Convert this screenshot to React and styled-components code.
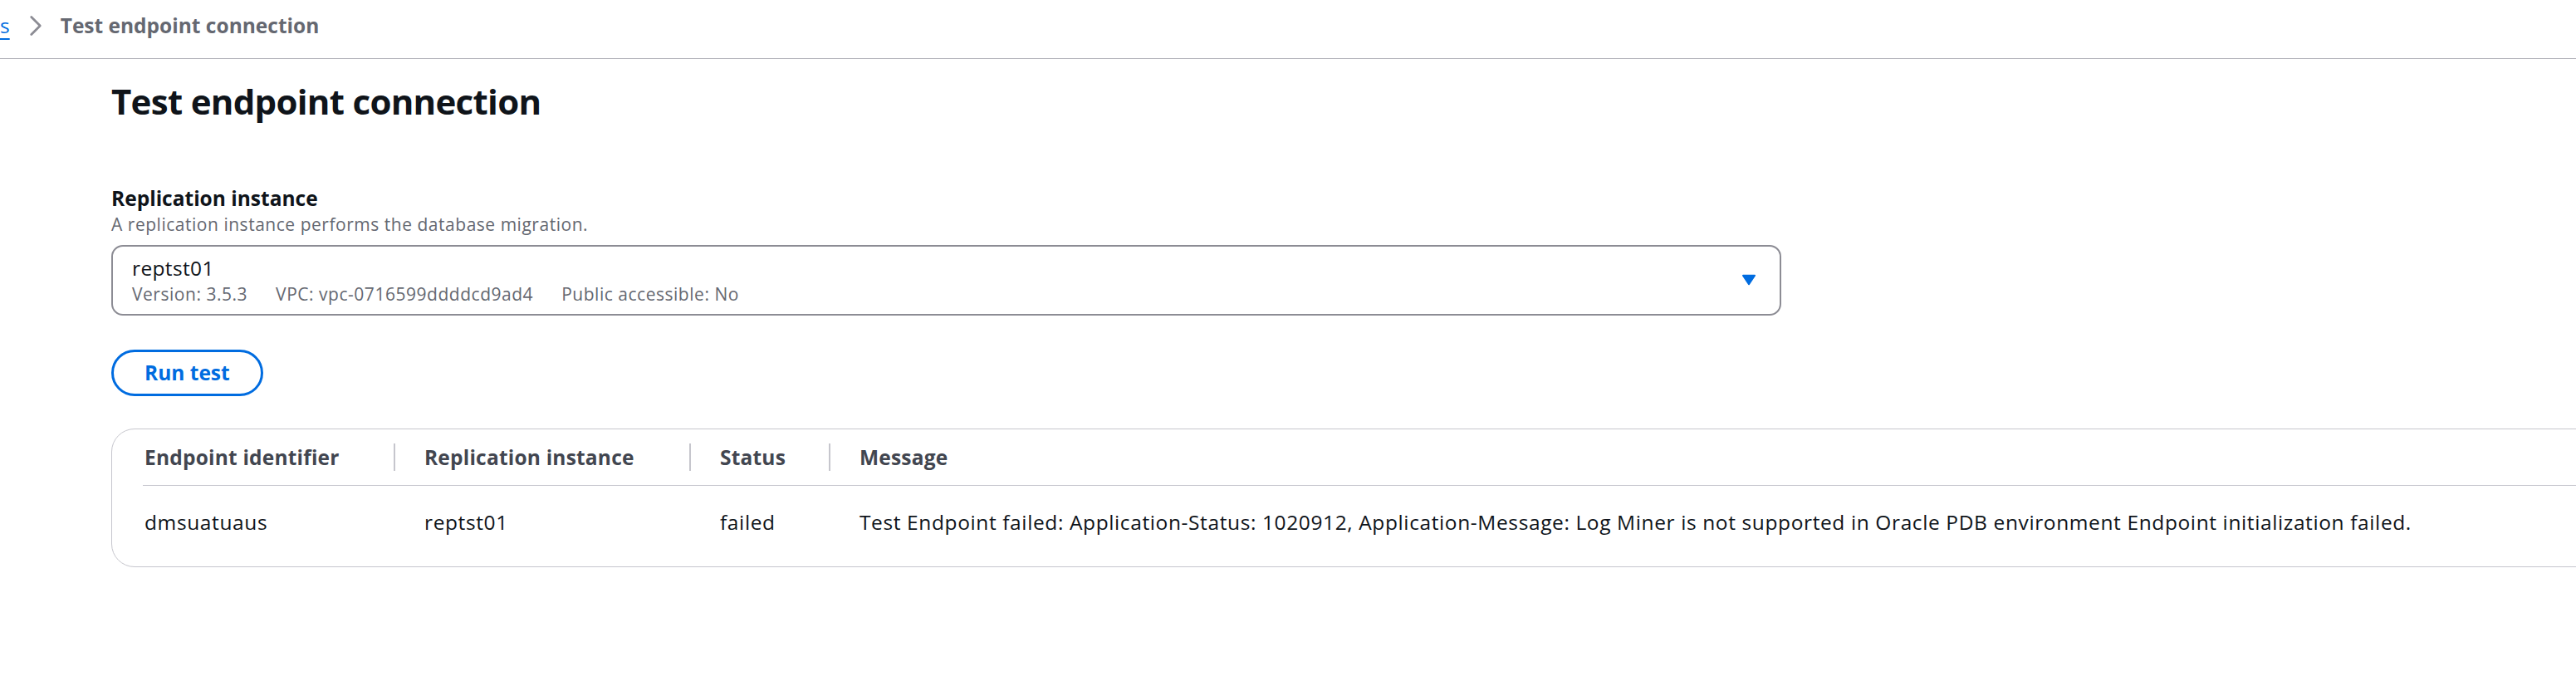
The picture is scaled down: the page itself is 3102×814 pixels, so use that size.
import React from "react";
import styled, { createGlobalStyle } from "styled-components";

const GlobalStyle = createGlobalStyle`
  html, body {
    margin: 0;
    padding: 0;
    background: #ffffff;
  }
  body {
    font-family: "Open Sans", "Noto Sans", sans-serif;
    color: #0f141a;
    overflow: hidden;
  }
  * { box-sizing: border-box; }
`;

const Page = styled.div`
  width: 100%;
  min-height: 814px;
  overflow: hidden;
`;

const BreadcrumbBar = styled.nav`
  display: flex;
  align-items: center;
  padding: 13px 0 22px;
  border-bottom: 1px solid #b4b4bb;
`;

const CrumbLink = styled.a`
  font-size: 24.5px;
  line-height: 35px;
  color: #006ce0;
  text-decoration: underline;
  text-decoration-thickness: 2px;
  text-underline-offset: 6px;
  cursor: pointer;
`;

const CrumbSep = styled.span`
  display: inline-flex;
  width: 28px;
  height: 28px;
  margin: 0 16px 0 17px;
  color: #8c8c94;
`;

const CrumbCurrent = styled.span`
  font-size: 24.5px;
  line-height: 35px;
  font-weight: 700;
  color: #656871;
`;

const Main = styled.main`
  display: flex;
  flex-direction: column;
  align-items: flex-start;
  padding: 25px 0 0 134px;
`;

const Title = styled.h1`
  margin: 0;
  font-size: 42px;
  line-height: 52px;
  font-weight: 700;
  letter-spacing: -0.7px;
  color: #0f141a;
`;

const Field = styled.div`
  display: flex;
  flex-direction: column;
  margin-top: 73px;
`;

const Label = styled.label`
  font-size: 24.5px;
  line-height: 35px;
  font-weight: 700;
  color: #0f141a;
`;

const Description = styled.div`
  font-size: 21px;
  line-height: 28px;
  letter-spacing: 0.025em;
  color: #656871;
`;

const SelectTrigger = styled.button`
  margin-top: 11px;
  width: 2011px;
  height: 85px;
  display: flex;
  align-items: center;
  justify-content: space-between;
  padding: 8px 23px 10px 23px;
  border: 2px solid #8c8c94;
  border-radius: 14px;
  background: #ffffff;
  font-family: inherit;
  text-align: left;
  cursor: pointer;
`;

const OptionText = styled.div`
  display: flex;
  flex-direction: column;
`;

const OptionLabel = styled.span`
  font-size: 24.5px;
  line-height: 35px;
  letter-spacing: 0.015em;
  color: #0f141a;
`;

const OptionTags = styled.div`
  display: flex;
  gap: 34px;
  font-size: 21px;
  line-height: 28px;
  letter-spacing: 0.025em;
  color: #656871;
`;

const Caret = styled.span`
  display: inline-flex;
  width: 28px;
  height: 28px;
  color: #006ce0;
`;

const RunButton = styled.button`
  margin-top: 41px;
  padding: 6px 37px;
  border: 3px solid #006ce0;
  border-radius: 35px;
  background: #ffffff;
  color: #006ce0;
  font-family: inherit;
  font-size: 24.5px;
  line-height: 38px;
  font-weight: 700;
  cursor: pointer;
`;

const Card = styled.section`
  margin-top: 39px;
  width: 3000px;
  border: 1px solid #c6c6cd;
  border-radius: 28px;
  padding-left: 37px;
  background: #ffffff;
`;

const Grid = styled.div`
  display: grid;
  grid-template-columns: 304px 356px 168px 1fr;
`;

const HeadCell = styled.div`
  display: flex;
  align-items: center;
  justify-content: space-between;
  padding: 16px 0 16px ${(p) => (p.$first ? "2px" : "35px")};
  border-bottom: 1px solid #c6c6cd;
  font-size: 24.5px;
  line-height: 35px;
  font-weight: 700;
  letter-spacing: 0.2px;
  color: #424650;
  white-space: nowrap;
`;

const Resizer = styled.span`
  width: 2px;
  height: 33px;
  background: #c6c6cd;
`;

const BodyCell = styled.div`
  padding: 26px 0 36px ${(p) => (p.$first ? "2px" : "35px")};
  font-size: 24.5px;
  line-height: 35px;
  letter-spacing: 0.025em;
  color: #0f141a;
  white-space: nowrap;
`;

const ChevronIcon = () => (
  <svg width="28" height="28" viewBox="0 0 16 16" fill="none">
    <path d="M5 2l6 6-6 6" stroke="currentColor" strokeWidth="1.6" strokeLinecap="round" strokeLinejoin="round" />
  </svg>
);

const CaretIcon = () => (
  <svg width="28" height="28" viewBox="0 0 16 16">
    <path d="M4 5h8l-4 6-4-6z" fill="currentColor" stroke="currentColor" strokeWidth="1.2" strokeLinejoin="round" />
  </svg>
);

const columns = ["Endpoint identifier", "Replication instance", "Status", "Message"];
const rows = [
  [
    "dmsuatuaus",
    "reptst01",
    "failed",
    "Test Endpoint failed: Application-Status: 1020912, Application-Message: Log Miner is not supported in Oracle PDB environment Endpoint initialization failed.",
  ],
];

export default function App() {
  return (
    <Page>
      <GlobalStyle />
      <BreadcrumbBar>
        <CrumbLink>s</CrumbLink>
        <CrumbSep>
          <ChevronIcon />
        </CrumbSep>
        <CrumbCurrent>Test endpoint connection</CrumbCurrent>
      </BreadcrumbBar>
      <Main>
        <Title>Test endpoint connection</Title>
        <Field>
          <Label>Replication instance</Label>
          <Description>A replication instance performs the database migration.</Description>
          <SelectTrigger type="button">
            <OptionText>
              <OptionLabel>reptst01</OptionLabel>
              <OptionTags>
                <span>Version: 3.5.3</span>
                <span>VPC: vpc-0716599ddddcd9ad4</span>
                <span>Public accessible: No</span>
              </OptionTags>
            </OptionText>
            <Caret>
              <CaretIcon />
            </Caret>
          </SelectTrigger>
        </Field>
        <RunButton type="button">Run test</RunButton>
        <Card>
          <Grid>
            {columns.map((c, i) => (
              <HeadCell key={c} $first={i === 0}>
                <span>{c}</span>
                {i < columns.length - 1 && <Resizer />}
              </HeadCell>
            ))}
            {rows.map((r, ri) =>
              r.map((v, i) => (
                <BodyCell key={`${ri}-${i}`} $first={i === 0}>
                  {v}
                </BodyCell>
              ))
            )}
          </Grid>
        </Card>
      </Main>
    </Page>
  );
}
